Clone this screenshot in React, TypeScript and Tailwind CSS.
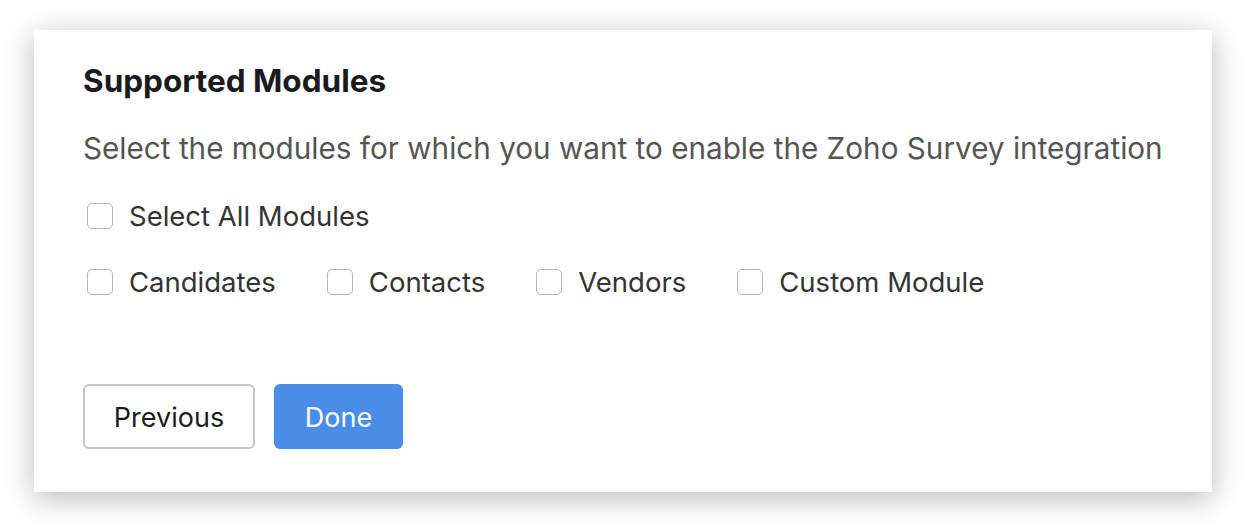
const items = ["Candidates", "Contacts", "Vendors", "Custom Module"];

function Box({ label }: { label: string }) {
  return (
    <label className="flex items-center gap-4 text-[27.5px] leading-[34px] text-[#333333]">
      <span className="ml-1 h-[26px] w-[26px] rounded-[5px] border-[1.5px] border-[#b5b5b5] bg-white" />
      {label}
    </label>
  );
}

export default function App() {
  return (
    <div className="h-[530px] w-[1246px] bg-white pl-[34px] pt-[30px]" style={{ fontFamily: "Inter, sans-serif" }}>
      <div className="h-[462px] w-[1178px] bg-white px-[49px] pt-[32px] shadow-[0_6px_28px_rgba(0,0,0,0.28)]">
        <h1 className="text-[31.5px] font-bold leading-[38px] text-[#1b1b1f]">Supported Modules</h1>
        <p className="mt-[30px] whitespace-nowrap text-[29.7px] leading-[36px] text-[#555555]">
          Select the modules for which you want to enable the Zoho Survey integration
        </p>
        <div className="mt-[33px]">
          <Box label="Select All Modules" />
        </div>
        <div className="mt-[32px] flex gap-[47px]">
          {items.map((i) => (
            <Box key={i} label={i} />
          ))}
        </div>
        <div className="mt-[85px] flex gap-[19px]">
          <button className="h-[65px] w-[172px] rounded-[6px] border-2 border-[#c6c6c6] bg-white pt-[4px] text-[27px] text-[#1b1b1f]">
            Previous
          </button>
          <button className="h-[65px] w-[129px] rounded-[6px] bg-[#4a8de8] pt-[4px] text-[27px] text-white">Done</button>
        </div>
      </div>
    </div>
  );
}
